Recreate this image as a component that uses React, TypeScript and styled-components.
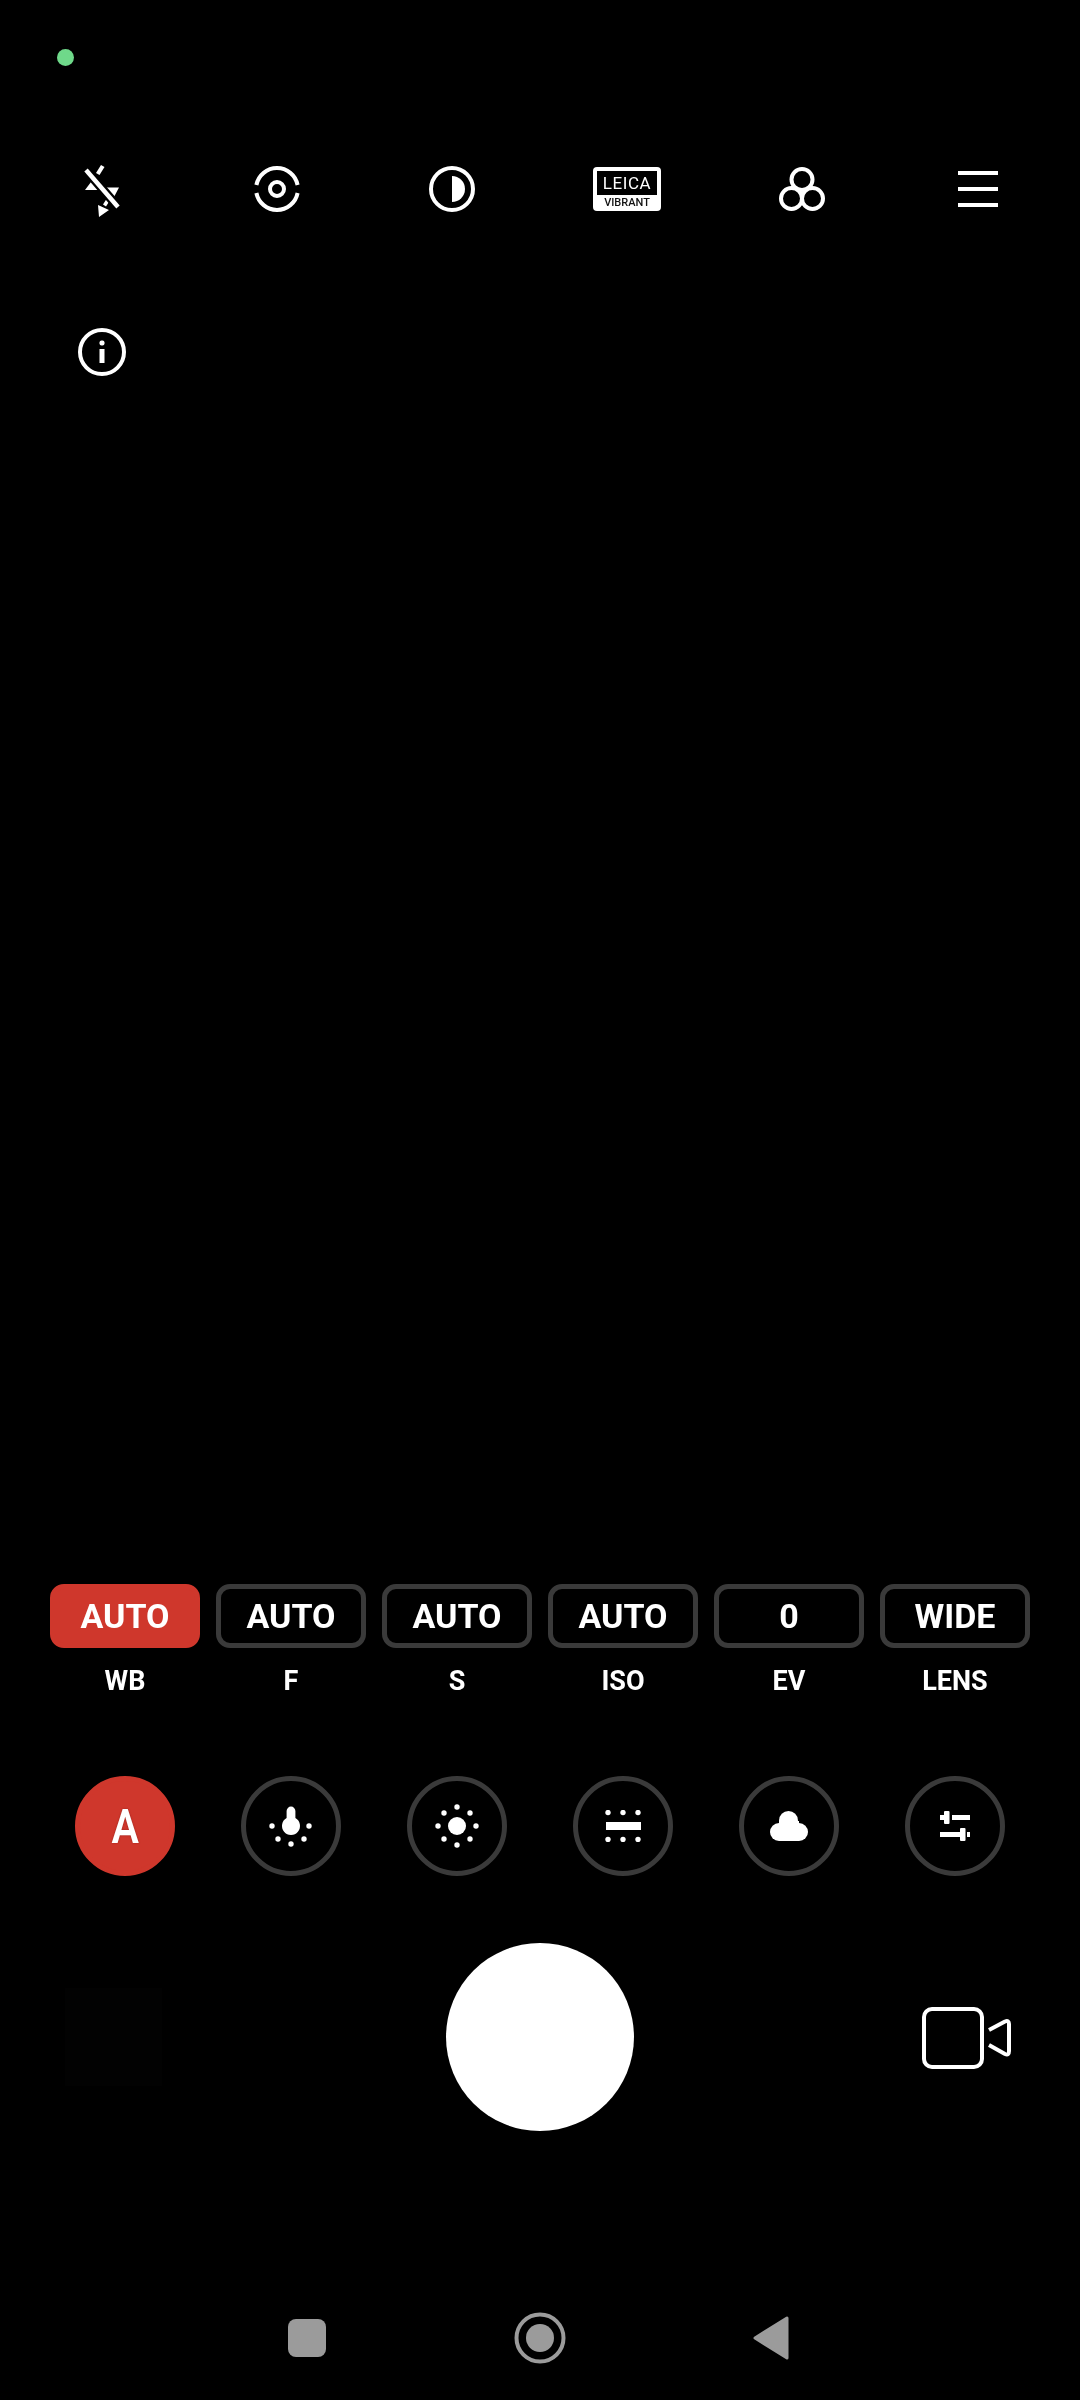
import React from 'react'
import styled, { createGlobalStyle } from 'styled-components'

const GlobalReset = createGlobalStyle`
  html, body {
    margin: 0;
    padding: 0;
    background: #000;
  }
  * { box-sizing: border-box; }
`

const RED = '#cf372c'
const RING = '#3a3a3a'
const NAV = '#9b9b9b'

const chips = [
  { value: 'AUTO', label: 'WB', active: true },
  { value: 'AUTO', label: 'F' },
  { value: 'AUTO', label: 'S' },
  { value: 'AUTO', label: 'ISO' },
  { value: '0', label: 'EV' },
  { value: 'WIDE', label: 'LENS' },
]

const FlashOff = () => (
  <svg width="60" height="70" viewBox="-3 -1 60 70" fill="#fff">
    <path d="M26 10l3.500 2-5 8-3.500-2zM16 27l10 8H10zM30 32.500h14l-5 9.500zM31.500 44l3 2-3.500 5.500-3-2zM23 50l11 5-10 7z" />
    <path d="M11 15l32 37" stroke="#000" strokeWidth="9" />
    <path d="M11 15l32 37" stroke="#fff" strokeWidth="4.500" />
  </svg>
)

const FocusIcon = () => (
  <svg width="46" height="46" viewBox="0 0 46 46" fill="none" stroke="#fff" strokeWidth="4">
    <path d="M2.400 19A21 21 0 0 1 43.600 19M2.400 27A21 21 0 0 0 43.600 27" />
    <circle cx="23" cy="23" r="7" />
  </svg>
)

const ContrastIcon = () => (
  <svg width="46" height="46" viewBox="0 0 46 46">
    <circle cx="23" cy="23" r="21" fill="none" stroke="#fff" strokeWidth="4" />
    <path d="M23 10a13 13 0 0 1 0 26z" fill="#fff" />
  </svg>
)

const FilterIcon = () => (
  <svg width="46" height="44" viewBox="0 0 46 44" fill="none" stroke="#fff" strokeWidth="4">
    <circle cx="23" cy="12.500" r="10.500" />
    <circle cx="12.500" cy="31.500" r="10.500" />
    <circle cx="33.500" cy="31.500" r="10.500" />
  </svg>
)

const InfoIcon = () => (
  <svg width="48" height="48" viewBox="0 0 48 48">
    <circle cx="24" cy="24" r="22" fill="none" stroke="#fff" strokeWidth="4" />
    <rect x="21.500" y="12.500" width="5" height="5" rx="2" fill="#fff" />
    <rect x="21.500" y="21" width="5" height="14" fill="#fff" />
  </svg>
)

const Dots = ({ points }: { points: number[][] }) => (
  <>
    {points.map(([x, y]) => (
      <circle key={`${x}-${y}`} cx={x} cy={y} r="2.700" fill="#fff" />
    ))}
  </>
)

const BulbIcon = () => (
  <svg width="44" height="44" viewBox="0 0 44 44" fill="#fff">
    <path d="M17.600 7a4.400 4.400 0 0 1 8.800 0v7.100a9 9 0 1 1-8.800 0z" />
    <Dots points={[[3, 22], [40, 22], [9, 35], [35, 35], [22, 40]]} />
  </svg>
)

const SunIcon = () => (
  <svg width="44" height="44" viewBox="0 0 44 44" fill="#fff">
    <circle cx="22" cy="22" r="9" />
    <Dots points={[[22, 3], [22, 41], [3, 22], [41, 22], [9, 9], [35, 9], [9, 35], [35, 35]]} />
  </svg>
)

const FluorescentIcon = () => (
  <svg width="36" height="32" viewBox="0 0 36 32" fill="#fff">
    <Dots points={[[3, 2.500], [18, 2.500], [33, 2.500], [3, 29.500], [18, 29.500], [33, 29.500]]} />
    <rect x="1" y="12" width="35" height="8" />
  </svg>
)

const CloudIcon = () => (
  <svg width="38" height="30" viewBox="0 0 38 30" fill="#fff">
    <circle cx="9" cy="21" r="9" />
    <circle cx="18.500" cy="9.500" r="9.500" />
    <circle cx="29" cy="21" r="9" />
    <rect x="9" y="10" width="20" height="20" />
  </svg>
)

const SlidersIcon = () => (
  <svg width="30" height="30" viewBox="0 0 30 30" fill="#fff">
    <rect x="0" y="4" width="4" height="5" />
    <rect x="4" y="0" width="5.500" height="13" rx="1" />
    <rect x="12" y="4" width="18" height="5" />
    <rect x="0" y="21" width="20" height="5" />
    <rect x="20" y="17" width="5.500" height="13" rx="1" />
    <rect x="27" y="21" width="3" height="5" />
  </svg>
)

const VideoIcon = () => (
  <svg width="90" height="62" viewBox="0 0 90 62" fill="none" stroke="#fff" strokeWidth="4" strokeLinejoin="round">
    <rect x="2" y="2" width="58" height="58" rx="8" />
    <path d="M67 23L83 14.500Q87 13 87 17V44Q87 49 83 47L67 38" />
  </svg>
)

const RecentsIcon = () => (
  <svg width="38" height="38" viewBox="0 0 38 38">
    <rect x="0" y="0" width="38" height="38" rx="8" fill={NAV} />
  </svg>
)

const HomeIcon = () => (
  <svg width="52" height="52" viewBox="0 0 52 52">
    <circle cx="26" cy="26" r="23.500" fill="none" stroke={NAV} strokeWidth="4" />
    <circle cx="26" cy="26" r="14" fill={NAV} />
  </svg>
)

const BackIcon = () => (
  <svg width="36" height="44" viewBox="0 0 36 44">
    <path d="M34 2V42L2 22z" fill={NAV} stroke={NAV} strokeWidth="3" strokeLinejoin="round" />
  </svg>
)

export default function App() {
  return (
    <>
      <GlobalReset />
      <Screen>
        <StatusBar>
          <PrivacyDot />
        </StatusBar>

        <TopBar>
          <TopItem><FlashOff /></TopItem>
          <TopItem><FocusIcon /></TopItem>
          <TopItem><ContrastIcon /></TopItem>
          <TopItem>
            <LeicaBadge>
              <LeicaName>LEICA</LeicaName>
              <LeicaMode>VIBRANT</LeicaMode>
            </LeicaBadge>
          </TopItem>
          <TopItem><FilterIcon /></TopItem>
          <TopItem>
            <MenuLines>
              <MenuLine />
              <MenuLine />
              <MenuLine />
            </MenuLines>
          </TopItem>
        </TopBar>

        <InfoRow>
          <InfoIcon />
        </InfoRow>

        <Viewfinder />

        <ChipGrid>
          {chips.map(chip => (
            <ChipCell key={chip.label}>
              <Chip $active={chip.active}>{chip.value}</Chip>
              <ChipLabel>{chip.label}</ChipLabel>
            </ChipCell>
          ))}
        </ChipGrid>

        <PresetGrid>
          <PresetCell><AutoPreset><AutoLetter>A</AutoLetter></AutoPreset></PresetCell>
          <PresetCell><Preset><BulbIcon /></Preset></PresetCell>
          <PresetCell><Preset><SunIcon /></Preset></PresetCell>
          <PresetCell><Preset><FluorescentIcon /></Preset></PresetCell>
          <PresetCell><Preset><CloudIcon /></Preset></PresetCell>
          <PresetCell><Preset><SlidersIcon /></Preset></PresetCell>
        </PresetGrid>

        <ShutterRow>
          <Thumbnail />
          <Shutter />
          <VideoSwitch><VideoIcon /></VideoSwitch>
        </ShutterRow>

        <NavBar>
          <RecentsIcon />
          <HomeIcon />
          <BackIcon />
        </NavBar>
      </Screen>
    </>
  )
}

const Screen = styled.div`
  width: 1080px;
  height: 2400px;
  display: flex;
  flex-direction: column;
  background: #000;
  color: #fff;
  font-family: Roboto, "Liberation Sans", sans-serif;
  overflow: hidden;
`

const StatusBar = styled.div`
  height: 114px;
  padding: 49px 0 0 57px;
`

const PrivacyDot = styled.div`
  width: 17px;
  height: 17px;
  border-radius: 50%;
  background: #6fd98a;
`

const TopBar = styled.div`
  height: 150px;
  padding: 0 15px 0 14.500px;
  display: grid;
  grid-template-columns: repeat(6, 175px);
  align-items: center;
`

const TopItem = styled.div`
  display: flex;
  justify-content: center;
  align-items: center;
`

const LeicaBadge = styled.div`
  width: 68px;
  height: 44px;
  padding: 4px 4px 0;
  border-radius: 4px;
  background: #fff;
  display: flex;
  flex-direction: column;
  align-items: stretch;
  will-change: transform;
`

const LeicaName = styled.div`
  height: 24px;
  background: #000;
  color: #fff;
  font-size: 17px;
  line-height: 24px;
  letter-spacing: 0.600px;
  text-align: center;
`

const LeicaMode = styled.div`
  color: #111;
  font-size: 11px;
  font-weight: 500;
  line-height: 15px;
  text-align: center;
  white-space: nowrap;
`

const MenuLines = styled.div`
  width: 40px;
  height: 36px;
  margin-left: 1px;
  display: flex;
  flex-direction: column;
  justify-content: space-between;
`

const MenuLine = styled.div`
  height: 4px;
  background: #fff;
`

const InfoRow = styled.div`
  padding: 64px 0 0 78px;
`

const Viewfinder = styled.div`
  flex: 1;
`

const ChipGrid = styled.div`
  padding: 0 50px;
  display: grid;
  grid-template-columns: repeat(6, 150px);
  column-gap: 16px;
  will-change: transform;
`

const ChipCell = styled.div`
  display: flex;
  flex-direction: column;
  align-items: center;
`

const Chip = styled.div<{ $active?: boolean }>`
  width: 150px;
  height: 64px;
  border-radius: 14px;
  border: 5px solid ${p => (p.$active ? RED : RING)};
  background: ${p => (p.$active ? RED : 'transparent')};
  display: flex;
  align-items: center;
  justify-content: center;
  font-size: 34px;
  font-weight: 700;
`

const ChipLabel = styled.div`
  margin-top: 17px;
  font-size: 27px;
  line-height: 32px;
  font-weight: 700;
`

const PresetGrid = styled.div`
  margin-top: 79px;
  padding: 0 50px;
  display: grid;
  grid-template-columns: repeat(6, 150px);
  column-gap: 16px;
  will-change: transform;
`

const PresetCell = styled.div`
  display: flex;
  justify-content: center;
`

const Preset = styled.div`
  width: 100px;
  height: 100px;
  border-radius: 50%;
  border: 5px solid ${RING};
  display: flex;
  align-items: center;
  justify-content: center;
`

const AutoPreset = styled(Preset)`
  border-color: ${RED};
  background: ${RED};
`

const AutoLetter = styled.span`
  font-size: 49px;
  font-weight: 600;
  line-height: 1;
  transform: scaleX(0.84);
  text-shadow: 0 0 2px #8c1f18;
`

const ShutterRow = styled.div`
  margin-top: 67px;
  height: 188px;
  position: relative;
  display: flex;
  justify-content: center;
  align-items: center;
`

const Thumbnail = styled.div`
  position: absolute;
  left: 65px;
  top: 45px;
  width: 97px;
  height: 98px;
  background: #020202;
`

const Shutter = styled.div`
  width: 188px;
  height: 188px;
  border-radius: 50%;
  background: #fff;
`

const VideoSwitch = styled.div`
  position: absolute;
  right: 68px;
  top: 64px;
  display: flex;
`

const NavBar = styled.div`
  margin: 181px 0 36px;
  height: 52px;
  padding: 0 291px 0 288px;
  display: flex;
  justify-content: space-between;
  align-items: center;
`
